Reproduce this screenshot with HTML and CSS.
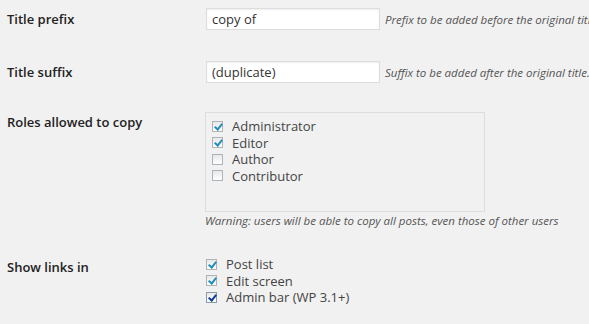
FILE: index.html
```html
<!DOCTYPE html>
<html lang="en">
<head>
  <meta charset="UTF-8">
  <title>Duplicate Post Options</title>
  <link rel="stylesheet" href="styles.css">
</head>
<body>
  <div class="form">
    <div class="row row-center row-first">
      <div class="label">Title prefix</div>
      <div class="field">
        <input class="text" type="text" value="copy of">
        <span class="desc">Prefix to be added before the original title</span>
      </div>
    </div>

    <div class="row row-center row-second">
      <div class="label">Title suffix</div>
      <div class="field">
        <input class="text" type="text" value="(duplicate)">
        <span class="desc">Suffix to be added after the original title.</span>
      </div>
    </div>

    <div class="row">
      <div class="label label-top">Roles allowed to copy</div>
      <div class="field field-col">
        <div class="roles">
          <label class="check"><span class="box on"></span>Administrator</label>
          <label class="check"><span class="box on"></span>Editor</label>
          <label class="check"><span class="box"></span>Author</label>
          <label class="check"><span class="box"></span>Contributor</label>
        </div>
        <span class="desc warn">Warning: users will be able to copy all posts, even those of other users</span>
      </div>
    </div>

    <div class="row row-last">
      <div class="label label-links">Show links in</div>
      <div class="field field-col links">
        <label class="check"><span class="box on"></span>Post list</label>
        <label class="check"><span class="box on"></span>Edit screen</label>
        <label class="check"><span class="box on dark"></span>Admin bar (WP 3.1+)</label>
      </div>
    </div>
  </div>
</body>
</html>
```

FILE: styles.css
```css
body {
  margin: 0;
  background: #f1f1f1;
  font-family: "Open Sans", "DejaVu Sans", sans-serif;
  color: #444;
  overflow: hidden;
}
.form {
  padding: 8px 0 0 7px;
}
.row {
  display: flex;
  align-items: flex-start;
}
.row-center {
  align-items: center;
  height: 22px;
}
.row-first {
  margin-bottom: 31px;
}
.row-second {
  margin-bottom: 29px;
}
.label {
  width: 198px;
  flex-shrink: 0;
  font-size: 13px;
  font-weight: 600;
  color: #222;
  line-height: 19px;
}
.label-top {
  padding-top: 1px;
}
.label-links {
  padding-top: 2px;
}
.field {
  display: flex;
  align-items: center;
  white-space: nowrap;
}
.field-col {
  flex-direction: column;
  align-items: flex-start;
}
.text {
  width: 174px;
  height: 22px;
  box-sizing: border-box;
  margin: 0 0 0 1px;
  padding: 0 5px;
  border: 1px solid #ddd;
  background: #fff;
  box-shadow: inset 0 1px 2px rgba(0,0,0,.07);
  font-family: "Open Sans", sans-serif;
  font-size: 13px;
  color: #333;
  outline: none;
}
.desc {
  margin-left: 5px;
  font-size: 11.5px;
  font-style: italic;
  color: #555;
}
.roles {
  width: 280px;
  height: 100px;
  box-sizing: border-box;
  border: 1px solid #ddd;
  padding: 5px 0 0 6px;
}
.warn {
  margin: 0;
  line-height: 17px;
}
.row-last {
  margin-top: 27px;
}
.links {
  padding-left: 1px;
}
.check {
  display: flex;
  align-items: center;
  font-size: 13px;
  line-height: 16.5px;
  color: #444;
}
.box {
  width: 11px;
  height: 11px;
  box-sizing: border-box;
  border: 1px solid #aeb3b8;
  background: linear-gradient(#e8e8e8, #fff);
  margin-right: 9px;
  position: relative;
}
.box.on::after {
  content: "";
  position: absolute;
  left: 3px;
  top: 0;
  width: 3px;
  height: 6px;
  border: solid #1e8cbe;
  border-width: 0 2px 2px 0;
  transform: rotate(40deg);
}
.box.dark {
  border-color: #8a9aa9;
}
.box.dark::after {
  border-color: #0b3a9a;
}
```
